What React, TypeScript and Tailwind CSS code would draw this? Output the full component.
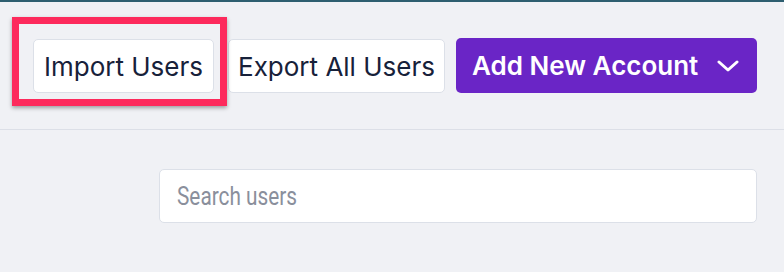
export default function App() {
  return (
    <div
      className="w-[784px] h-[272px] bg-[#f0f1f5] border-t-2 border-[#2e5e70] overflow-hidden"
      style={{ fontFamily: "Inter, 'Noto Sans', sans-serif" }}
    >
      <div className="flex items-start h-[128px] pl-[33px] pt-[37px] border-b border-[#dcdfe7]">
        <div className="relative">
          <button className="h-[54px] w-[181px] bg-white border border-[#dce0e8] rounded-[5px] text-[26px] text-[#17213a]">
            Import Users
          </button>
          <div className="absolute left-[-21px] top-[-22px] w-[215px] h-[89px] border-[7px] border-[#fd2a5c] shadow-[0_2px_4px_rgba(0,0,0,0.35)] pointer-events-none" />
        </div>
        <button className="ml-[14px] h-[54px] w-[217px] bg-white border border-[#dce0e8] rounded-[5px] text-[26px] text-[#17213a]">
          Export All Users
        </button>
        <button className="ml-[11px] -mt-[1px] h-[55px] w-[301px] bg-[#6a25c6] rounded-[5px] text-[26px] font-semibold text-white flex items-center pl-[16px]">
          Add New Account
          <svg width="22" height="12" viewBox="0 0 22 12" className="ml-[19px]">
            <polyline
              points="2,2 11,10 20,2"
              fill="none"
              stroke="white"
              strokeWidth="3"
              strokeLinecap="round"
              strokeLinejoin="round"
            />
          </svg>
        </button>
      </div>
      <div className="pl-[159px] pt-[39px]">
        <div className="w-[598px] h-[54px] bg-white border border-[#dce0e8] rounded-[5px] pl-[17px] flex items-center">
          <span
            className="text-[26px] text-[#8a8f9c] scale-x-[0.8] origin-left whitespace-nowrap"
            style={{ fontFamily: "Roboto, sans-serif" }}
          >
            Search users
          </span>
        </div>
      </div>
    </div>
  );
}
